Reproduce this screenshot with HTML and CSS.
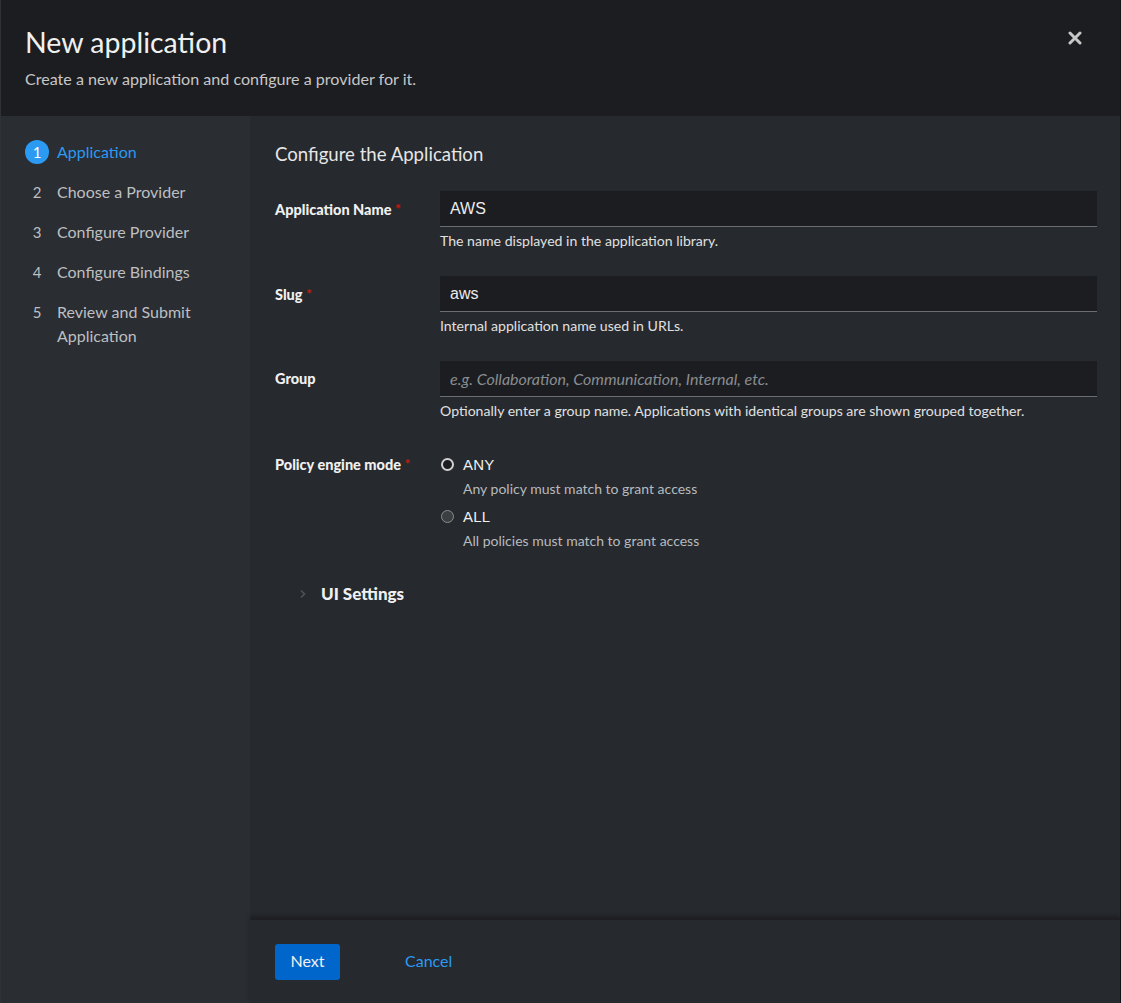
FILE: index.html
```html
<!DOCTYPE html>
<html lang="en">
<head>
<meta charset="utf-8">
<title>New application</title>
<link rel="stylesheet" href="styles.css">
</head>
<body>
<div class="modal">
  <header class="modal-header">
    <div class="header-text">
      <h1 class="title">New application</h1>
      <p class="subtitle">Create a new application and configure a provider for it.</p>
    </div>
    <button class="close" aria-label="Close">
      <svg width="14" height="14" viewBox="0 0 14 14"><path d="M2 2 L12 12 M12 2 L2 12" stroke="#c7c7c7" stroke-width="3" stroke-linecap="round"/></svg>
    </button>
  </header>
  <div class="modal-body">
    <nav class="steps">
      <div class="step current"><span class="num">1</span><span class="label">Application</span></div>
      <div class="step"><span class="num">2</span><span class="label">Choose a Provider</span></div>
      <div class="step"><span class="num">3</span><span class="label">Configure Provider</span></div>
      <div class="step"><span class="num">4</span><span class="label">Configure Bindings</span></div>
      <div class="step"><span class="num">5</span><span class="label">Review and Submit Application</span></div>
    </nav>
    <div class="main">
      <section class="content">
        <h2 class="section-title">Configure the Application</h2>
        <form class="form">
          <div class="row">
            <label class="flabel">Application Name <span class="req">*</span></label>
            <div class="control">
              <div class="input">AWS</div>
              <div class="helper">The name displayed in the application library.</div>
            </div>
          </div>
          <div class="row">
            <label class="flabel">Slug <span class="req">*</span></label>
            <div class="control">
              <div class="input">aws</div>
              <div class="helper">Internal application name used in URLs.</div>
            </div>
          </div>
          <div class="row">
            <label class="flabel">Group</label>
            <div class="control">
              <div class="input placeholder">e.g. Collaboration, Communication, Internal, etc.</div>
              <div class="helper">Optionally enter a group name. Applications with identical groups are shown grouped together.</div>
            </div>
          </div>
          <div class="row policy">
            <label class="flabel">Policy engine mode <span class="req">*</span></label>
            <div class="control radios">
              <div class="radio"><span class="dot checked"></span><span class="rlabel">ANY</span></div>
              <div class="rdesc">Any policy must match to grant access</div>
              <div class="radio"><span class="dot"></span><span class="rlabel">ALL</span></div>
              <div class="rdesc">All policies must match to grant access</div>
            </div>
          </div>
        </form>
        <div class="expander">
          <svg class="chev" width="8" height="10" viewBox="0 0 8 10"><path d="M2 1.5 L5.5 5 L2 8.5" fill="none" stroke="#4f5357" stroke-width="1.6"/></svg>
          <span>UI Settings</span>
        </div>
      </section>
      <footer class="footer">
        <button class="btn-primary">Next</button>
        <button class="btn-link">Cancel</button>
      </footer>
    </div>
  </div>
</div>
</body>
</html>
```
FILE: styles.css
```css
* { box-sizing: border-box; }
html, body { margin: 0; padding: 0; height: 100%; }
body {
  font-family: "Lato", "Open Sans", sans-serif;
  background: #1b1d21;
  color: #e0e0e0;
}
.modal {
  height: 1003px;
  display: flex;
  flex-direction: column;
  border-left: 1px solid #2e3136;
  border-right: 1px solid #151619;
}
.modal-header {
  height: 116px;
  flex: none;
  background: #1b1d21;
  display: flex;
  justify-content: space-between;
  padding: 24px 38px 0 24px;
}
.title {
  margin: 0;
  font-family: "Lato", sans-serif;
  font-weight: 400;
  font-size: 28.5px;
  line-height: 36px;
  color: #f0f0f0;
}
.subtitle {
  margin: 8px 0 0;
  font-size: 16.1px;
  line-height: 22px;
  color: #c7c7c7;
}
.close {
  background: none;
  border: 0;
  padding: 0;
  margin-top: 7px;
  height: 14px;
  cursor: pointer;
}
.modal-body {
  flex: 1;
  display: flex;
  min-height: 0;
}
.steps {
  width: 249px;
  flex: none;
  background: #2a2d32;
  padding: 24px 16px 0 24px;
}
.step {
  display: flex;
  align-items: flex-start;
  font-size: 16px;
  line-height: 24px;
  color: #bdbfc1;
  margin-bottom: 16px;
}
.step .num {
  width: 24px;
  height: 24px;
  flex: none;
  text-align: center;
  font-size: 15px;
  margin-right: 8px;
}
.step.current .num {
  background: #2b9af3;
  color: #fff;
  border-radius: 50%;
}
.step.current .label { color: #2b9af3; }
.main {
  flex: 1;
  display: flex;
  flex-direction: column;
  background: #26292e;
}
.content {
  flex: 1;
  padding: 25px 23px 0 25px;
}
.section-title {
  margin: 0 0 24px;
  font-size: 18.6px;
  font-weight: 400;
  line-height: 26px;
  color: #e6e6e6;
}
.form { display: flex; flex-direction: column; gap: 26px; }
.row {
  display: grid;
  grid-template-columns: 165px 1fr;
}
.flabel {
  font-size: 14.5px;
  font-weight: 900;
  line-height: 20px;
  padding-top: 8px;
  color: #f0f0f0;
}
.req { color: #c9190b; font-size: 14px; font-weight: 700; vertical-align: 1px; }
.input {
  height: 36px;
  background: #1b1d21;
  border-bottom: 1px solid #6a6e73;
  padding: 0 10px;
  font-family: "Liberation Sans", Arial, sans-serif;
  font-size: 16px;
  line-height: 35px;
  color: #ececec;
}
.input.placeholder {
  font-family: "Lato", sans-serif;
  font-style: italic;
  color: #8a8d90;
}
.helper {
  margin-top: 5px;
  font-size: 14.1px;
  line-height: 18px;
  color: #e0e0e0;
}
.row.policy { margin-top: 6px; }
.row.policy .flabel { padding-top: 2px; }
.radio {
  display: flex;
  align-items: center;
  height: 24px;
}
.dot {
  width: 13px;
  height: 13px;
  border-radius: 50%;
  background: #3c3f42;
  border: 1px solid #8a8d90;
  margin: 0 9px 0 1px;
  flex: none;
}
.dot.checked {
  background: #1b1d21;
  border: 2px solid #d2d2d2;
}
.rlabel {
  font-family: "Liberation Sans", Arial, sans-serif;
  font-size: 15px;
  letter-spacing: 0.2px;
  color: #f0f0f0;
}
.rdesc {
  margin: 3px 0 5px 23px;
  font-size: 14px;
  line-height: 20px;
  color: #b8bbbe;
}
.expander {
  margin: 26px 0 0 24px;
  display: flex;
  align-items: center;
  gap: 14px;
  font-size: 17px;
  font-weight: 900;
  color: #f0f0f0;
  line-height: 24px;
}
.footer {
  flex: none;
  height: 85px;
  border-top: 2px solid #1d1f23;
  box-shadow: 0 -2px 4px rgba(0,0,0,0.25);
  background: #26292e;
  padding: 24px 25px 0;
  display: flex;
  align-items: flex-start;
}
.btn-primary {
  width: 65px;
  height: 36px;
  padding: 0 0 3px;
  background: #0066cc;
  border: 0;
  border-radius: 3px;
  color: #f0f0f0;
  font-family: "Lato", sans-serif;
  font-size: 16px;
  cursor: pointer;
}
.btn-link {
  margin-left: 49px;
  height: 36px;
  padding: 0 16px 3px;
  background: none;
  border: 0;
  color: #2b9af3;
  font-family: "Lato", sans-serif;
  font-size: 16px;
  cursor: pointer;
}
```
